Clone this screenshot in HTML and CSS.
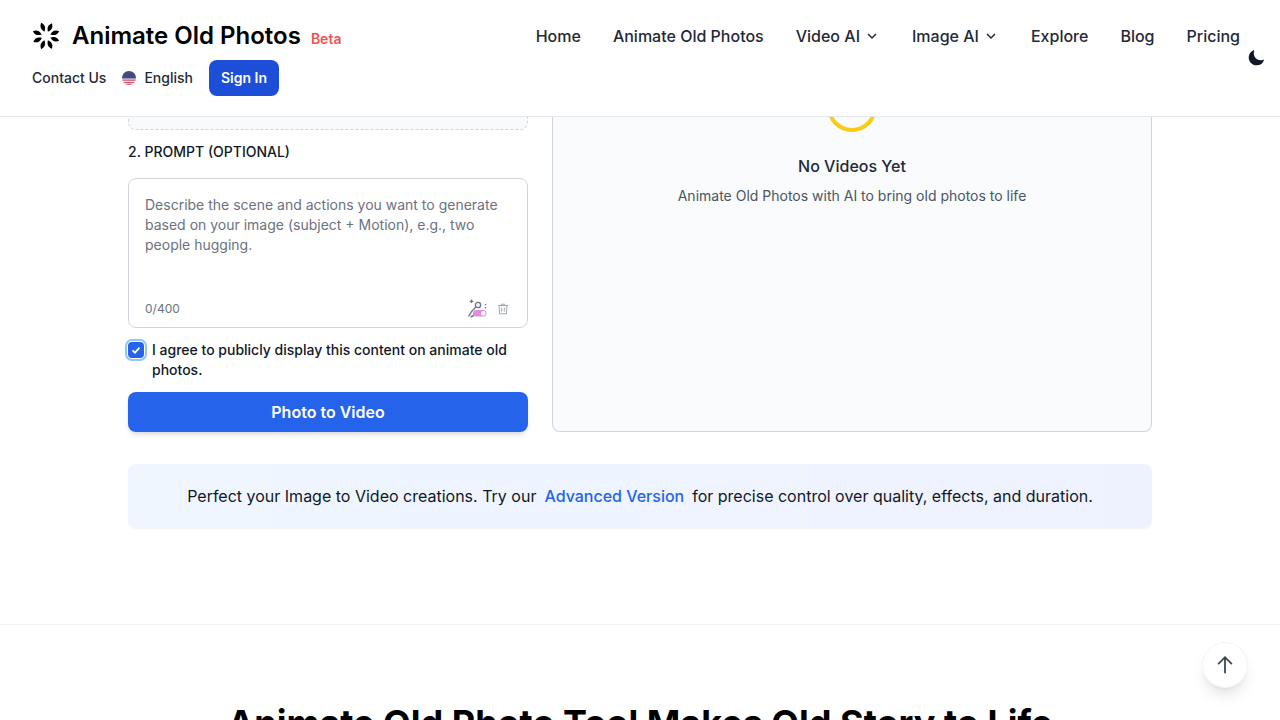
FILE: index.html
```html
<!DOCTYPE html>
<html lang="en">
<head>
<meta charset="utf-8">
<title>Animate Old Photos</title>
<link rel="stylesheet" href="styles.css">
</head>
<body>
<header class="site-header">
  <div class="header-main">
    <div class="header-row">
      <a class="brand">
        <svg class="brand-icon" viewBox="0 0 28 28" aria-hidden="true">
          <g fill="#000">
            <path d="M14 0c2.700 3 2.900 6 0 9.400-2.900-3.400-2.700-6.400 0-9.400z" transform="rotate(-20 14 14)"/>
            <path d="M14 0c2.700 3 2.900 6 0 9.400-2.900-3.400-2.700-6.400 0-9.400z" transform="rotate(25 14 14)"/>
            <path d="M14 0c2.700 3 2.900 6 0 9.400-2.900-3.400-2.700-6.400 0-9.400z" transform="rotate(70 14 14)"/>
            <path d="M14 0c2.700 3 2.900 6 0 9.400-2.900-3.400-2.700-6.400 0-9.400z" transform="rotate(110 14 14)"/>
            <path d="M14 0c2.700 3 2.900 6 0 9.400-2.900-3.400-2.700-6.400 0-9.400z" transform="rotate(155 14 14)"/>
            <path d="M14 0c2.700 3 2.900 6 0 9.400-2.900-3.400-2.700-6.400 0-9.400z" transform="rotate(200 14 14)"/>
            <path d="M14 0c2.700 3 2.900 6 0 9.400-2.900-3.400-2.700-6.400 0-9.400z" transform="rotate(245 14 14)"/>
            <path d="M14 0c2.700 3 2.900 6 0 9.400-2.900-3.400-2.700-6.400 0-9.400z" transform="rotate(290 14 14)"/>
          </g>
        </svg>
        <span class="brand-name">Animate Old Photos</span>
        <span class="brand-tag">Beta</span>
      </a>
      <nav class="nav">
        <a class="nav-link">Home</a>
        <a class="nav-link">Animate Old Photos</a>
        <a class="nav-link">Video AI <svg class="chev" viewBox="0 0 16 16"><path d="M4 6l4 4 4-4"/></svg></a>
        <a class="nav-link">Image AI <svg class="chev" viewBox="0 0 16 16"><path d="M4 6l4 4 4-4"/></svg></a>
        <a class="nav-link">Explore</a>
        <a class="nav-link">Blog</a>
        <a class="nav-link">Pricing</a>
      </nav>
    </div>
    <div class="header-sub">
      <a class="sub-link">Contact Us</a>
      <a class="sub-link lang">
        <svg class="flag" viewBox="0 0 14 14" aria-hidden="true">
          <defs><clipPath id="flag-clip"><circle cx="7" cy="7" r="7"/></clipPath></defs>
          <g clip-path="url(#flag-clip)">
            <rect width="14" height="14" fill="#efe9ee"/>
            <rect y="8.500" width="14" height="1.300" fill="#d9596d"/>
            <rect y="11" width="14" height="1.300" fill="#d9596d"/>
            <rect y="13" width="14" height="1" fill="#d9596d"/>
            <rect width="14" height="7.500" fill="#45497f"/>
          </g>
        </svg>
        English
      </a>
      <a class="signin">Sign In</a>
    </div>
  </div>
  <svg class="moon" viewBox="0 0 24 24" aria-hidden="true"><path d="M9.528 1.718a.75.75 0 01.162.819A8.970 8.970 0 009 6a9 9 0 009 9 8.970 8.970 0 003.463-.69.75.75 0 01.981.980 10.503 10.503 0 01-9.694 6.460c-5.799 0-10.500-4.701-10.500-10.500 0-4.368 2.667-8.112 6.460-9.694a.75.75 0 01.818.162z"/></svg>
</header>

<main>
  <section class="tool">
    <div class="form-col">
      <div class="dropzone"></div>
      <h2 class="field-label">2. PROMPT (OPTIONAL)</h2>
      <div class="prompt-box">
        <p class="placeholder">Describe the scene and actions you want to generate based on your image (subject + Motion), e.g., two people hugging.</p>
        <div class="prompt-foot">
          <span class="count">0/400</span>
          <span class="prompt-tools">
            <svg class="wand" viewBox="0 0 20 20" aria-hidden="true">
              <path class="wand-line" d="M1.500 17.500C3 14 5.500 11 8.800 8M3.500 17.800c2 0 3.500-1.300 5-3.300"/>
              <circle class="wand-line" cx="11" cy="6" r="2.600"/>
              <path class="wand-star" d="M4.500.5v3.600M2.700 2.300h3.600M18.500 5v1.200M18.500 8v1.200"/>
              <rect x="6" y="11" width="13.500" height="6.500" rx="3.250" fill="#e28ae0"/>
              <circle cx="16.300" cy="14.250" r="2.300" fill="#fff"/>
            </svg>
            <svg class="trash" viewBox="0 0 16 16" aria-hidden="true">
              <path d="M2.500 4h11M6 4V2.500h4V4M3.500 4l.6 9.500h7.800l.6-9.500M6.500 6.500v4.500M9.500 6.500v4.500"/>
            </svg>
          </span>
        </div>
      </div>
      <label class="agree">
        <span class="check-wrap"><span class="check"><svg viewBox="0 0 12 12"><path d="M2.500 6.300 5 8.600 9.500 3.600"/></svg></span></span>
        <span>I agree to publicly display this content on animate old photos.</span>
      </label>
      <button class="generate">Photo to Video</button>
    </div>
    <div class="result-col">
      <div class="spinner"></div>
      <h3 class="empty-title">No Videos Yet</h3>
      <p class="empty-text">Animate Old Photos with AI to bring old photos to life</p>
    </div>
  </section>

  <aside class="promo">
    <span>Perfect your Image to Video creations. Try our</span>
    <a class="promo-link">Advanced Version</a>
    <span>for precise control over quality, effects, and duration.</span>
  </aside>

  <section class="story">
    <h2 class="story-title">Animate Old Photo Tool Makes Old Story to Life</h2>
  </section>
</main>

<button class="to-top" aria-label="Back to top">
  <svg viewBox="0 0 16 16"><path d="M8 14.500V2M2.500 7.300 8 1.800l5.500 5.500"/></svg>
</button>
</body>
</html>
```
FILE: styles.css
```css
* { box-sizing: border-box; }
html, body { height: 720px; overflow: hidden; }
body {
  margin: 0;
  background: #fff;
  color: #111827;
  font-family: Inter, "Liberation Sans", sans-serif;
}
a { color: inherit; text-decoration: none; }
h2, h3, p { margin: 0; }

.site-header {
  position: relative;
  z-index: 2;
  height: 117px;
  padding: 0 15px 3px 32px;
  display: flex;
  align-items: center;
  background: #fff;
  border-bottom: 1px solid #e5e7eb;
}
.header-main { width: 1215px; }
.header-row {
  display: flex;
  align-items: center;
  justify-content: space-between;
  height: 36px;
  margin-bottom: 6px;
}
.brand { display: flex; align-items: center; color: #000; }
.brand-icon { width: 28px; height: 28px; margin-right: 12px; }
.brand-name { font-size: 24px; font-weight: 600; line-height: 32px; }
.brand-tag { font-size: 14px; font-weight: 600; color: #ef5350; margin: 6px 0 0 10px; }
.nav { display: flex; gap: 32px; margin-right: 7px; }
.nav-link {
  display: flex;
  align-items: center;
  gap: 4px;
  font-size: 16px;
  font-weight: 500;
  line-height: 24px;
  color: #1f2937;
}
.chev { width: 16px; height: 16px; fill: none; stroke: #1f2937; stroke-width: 1.500; }

.header-sub { display: flex; align-items: center; height: 36px; gap: 16px; }
.sub-link { font-size: 14px; font-weight: 500; color: #1f2937; line-height: 20px; }
.lang { display: flex; align-items: center; gap: 8px; }
.flag { width: 14px; height: 14px; }
.signin {
  display: block;
  padding: 8px 12px;
  background: #1d4ed8;
  border-radius: 8px;
  color: #fff;
  font-size: 14px;
  font-weight: 600;
  line-height: 20px;
}
.moon { width: 18px; height: 18px; margin-top: 3px; fill: #111827; }

main { display: block; margin-top: -1px; }
.tool {
  width: 1024px;
  margin: 0 auto;
  display: grid;
  grid-template-columns: 400px 600px;
  gap: 24px;
}
.dropzone {
  height: 14px;
  background: #f9fafb;
  border: 1px dashed #d1d5db;
  border-top: 0;
  border-radius: 0 0 8px 8px;
}
.field-label {
  margin-top: 12px;
  font-size: 14px;
  font-weight: 500;
  line-height: 20px;
  color: #111827;
}
.prompt-box {
  margin-top: 16px;
  height: 150px;
  padding: 16px 16px 8px;
  display: flex;
  flex-direction: column;
  justify-content: space-between;
  border: 1px solid #d1d5db;
  border-radius: 8px;
}
.placeholder { font-size: 14px; line-height: 20px; color: #6b7280; }
.prompt-foot { display: flex; align-items: center; justify-content: space-between; }
.count { font-size: 12px; line-height: 16px; color: #6b7280; }
.prompt-tools { display: flex; align-items: center; gap: 9px; margin-right: 1px; }
.wand { width: 20px; height: 20px; }
.wand-line, .wand-star { fill: none; stroke: #6b7280; stroke-width: 1.300; }
.trash { width: 14px; height: 14px; fill: none; stroke: #9ca3af; stroke-width: 1.100; }

.agree {
  margin-top: 12px;
  display: flex;
  gap: 8px;
  font-size: 14px;
  font-weight: 500;
  line-height: 20px;
  color: #111827;
}
.check-wrap {
  flex: none;
  width: 16px;
  height: 20px;
  display: flex;
  align-items: center;
  justify-content: center;
}
.check {
  width: 16px;
  height: 16px;
  display: flex;
  align-items: center;
  justify-content: center;
  background: #2563eb;
  border-radius: 4px;
  box-shadow: 0 0 0 1px #fff, 0 0 0 3px #93c5fd;
}
.check svg { width: 12px; height: 12px; fill: none; stroke: #fff; stroke-width: 1.800; }
.generate {
  display: block;
  width: 100%;
  height: 40px;
  margin-top: 12px;
  background: #2563eb;
  border: 0;
  border-radius: 8px;
  box-shadow: 0 4px 6px -1px rgba(0,0,0,.1), 0 2px 4px -2px rgba(0,0,0,.1);
  color: #fff;
  font: 600 16px/24px Inter, "Liberation Sans", sans-serif;
}
.result-col {
  height: 316px;
  overflow: hidden;
  display: flex;
  flex-direction: column;
  align-items: center;
  background: #f9fbfc;
  border: 1px solid #d1d5db;
  border-top: 0;
  border-radius: 0 0 8px 8px;
}
.spinner {
  flex: none;
  width: 50px;
  height: 50px;
  margin-top: -34px;
  border: 4px solid #facc15;
  border-radius: 50%;
}
.empty-title {
  margin-top: 22px;
  font-size: 16px;
  font-weight: 500;
  line-height: 24px;
  color: #1f2937;
}
.empty-text { margin-top: 8px; font-size: 14px; line-height: 20px; color: #4b5563; }

.promo {
  width: 1024px;
  height: 64px;
  margin: 32px auto 0;
  display: flex;
  align-items: center;
  justify-content: center;
  gap: 8px;
  background: linear-gradient(90deg, #eff6ff, #eef2ff);
  border-radius: 8px;
  box-shadow: 0 1px 2px rgba(0,0,0,.05);
  font-size: 16px;
  line-height: 24px;
  color: #111827;
}
.promo-link { font-weight: 500; color: #2563eb; }

.story {
  margin-top: 96px;
  padding-top: 78px;
  border-top: 1px solid #f3f4f6;
  text-align: center;
}
.story-title { font-size: 36px; font-weight: 700; line-height: 40px; color: #000; }

.to-top {
  position: fixed;
  left: 1202px;
  top: 642px;
  width: 46px;
  height: 46px;
  padding: 0;
  display: flex;
  align-items: center;
  justify-content: center;
  background: #fff;
  border: 1px solid #f3f4f6;
  border-radius: 50%;
  box-shadow: 0 10px 15px -3px rgba(0,0,0,.1), 0 4px 6px -4px rgba(0,0,0,.1);
}
.to-top svg { width: 20px; height: 20px; fill: none; stroke: #374151; stroke-width: 1.400; }
```
